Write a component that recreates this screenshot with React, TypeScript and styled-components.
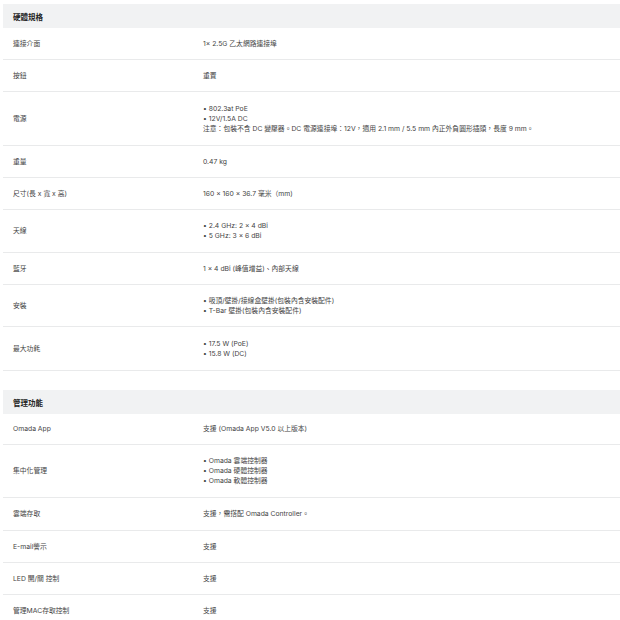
import styled, { createGlobalStyle } from "styled-components";

const Global = createGlobalStyle`
  * { box-sizing: border-box; }
  body {
    margin: 0;
    padding: 4px 0 0 3px;
    background: #fff;
    font-family: "Inter", "Noto Sans CJK TC", sans-serif;
    color: #333;
  }
`;

const Section = styled.section<{ gap?: number }>`
  margin-top: ${(p) => p.gap ?? 0}px;
`;

const Head = styled.div`
  height: 24px;
  background: #f1f2f3;
  display: flex;
  align-items: center;
  padding-left: 10px;
  font-size: 7.5px;
  font-weight: 700;
  color: #222;
`;

const Row = styled.div<{ h: number }>`
  height: ${(p) => p.h}px;
  display: grid;
  grid-template-columns: 190px 1fr;
  align-items: center;
  border-bottom: 1px solid #e9eaeb;
  padding-left: 10px;
  font-size: 6.8px;
  line-height: 10px;
  color: #444;
`;

const Lines = styled.div`
  display: flex;
  flex-direction: column;
`;

interface Spec {
  label: string;
  value: string[];
  h: number;
}

const hardware: Spec[] = [
  { label: "連接介面", value: ["1× 2.5G 乙太網路連接埠"], h: 32 },
  { label: "按鈕", value: ["重置"], h: 32 },
  {
    label: "電源",
    value: [
      "• 802.3at PoE",
      "• 12V/1.5A DC",
      "注意：包裝不含 DC 變壓器。DC 電源連接埠：12V，適用 2.1 mm / 5.5 mm 內正外負圓形插頭，長度 9 mm。",
    ],
    h: 54,
  },
  { label: "重量", value: ["0.47 kg"], h: 32 },
  { label: "尺寸(長 x 寬 x 高)", value: ["160 × 160 × 36.7 毫米（mm)"], h: 32 },
  { label: "天線", value: ["• 2.4 GHz: 2 × 4 dBi", "• 5 GHz: 3 × 6 dBi"], h: 43 },
  { label: "藍牙", value: ["1 × 4 dBi (峰值增益)、內部天線"], h: 32 },
  { label: "安裝", value: ["• 吸頂/壁掛/接線盒壁掛(包裝內含安裝配件)", "• T-Bar 壁掛(包裝內含安裝配件)"], h: 42 },
  { label: "最大功耗", value: ["• 17.5 W (PoE)", "• 15.8 W (DC)"], h: 44 },
];

const management: Spec[] = [
  { label: "Omada App", value: ["支援 (Omada App V5.0 以上版本)"], h: 31 },
  { label: "集中化管理", value: ["• Omada 雲端控制器", "• Omada 硬體控制器", "• Omada 軟體控制器"], h: 53 },
  { label: "雲端存取", value: ["支援，需搭配 Omada Controller。"], h: 33 },
  { label: "E-mail警示", value: ["支援"], h: 32 },
  { label: "LED 開/關 控制", value: ["支援"], h: 32 },
  { label: "管理MAC存取控制", value: ["支援"], h: 32 },
];

function Table({ title, rows, gap }: { title: string; rows: Spec[]; gap?: number }) {
  return (
    <Section gap={gap}>
      <Head>{title}</Head>
      {rows.map((r) => (
        <Row key={r.label} h={r.h}>
          <span>{r.label}</span>
          <Lines>
            {r.value.map((v) => (
              <span key={v}>{v}</span>
            ))}
          </Lines>
        </Row>
      ))}
    </Section>
  );
}

export default function App() {
  return (
    <>
      <Global />
      <Table title="硬體規格" rows={hardware} />
      <Table title="管理功能" rows={management} gap={19} />
    </>
  );
}
